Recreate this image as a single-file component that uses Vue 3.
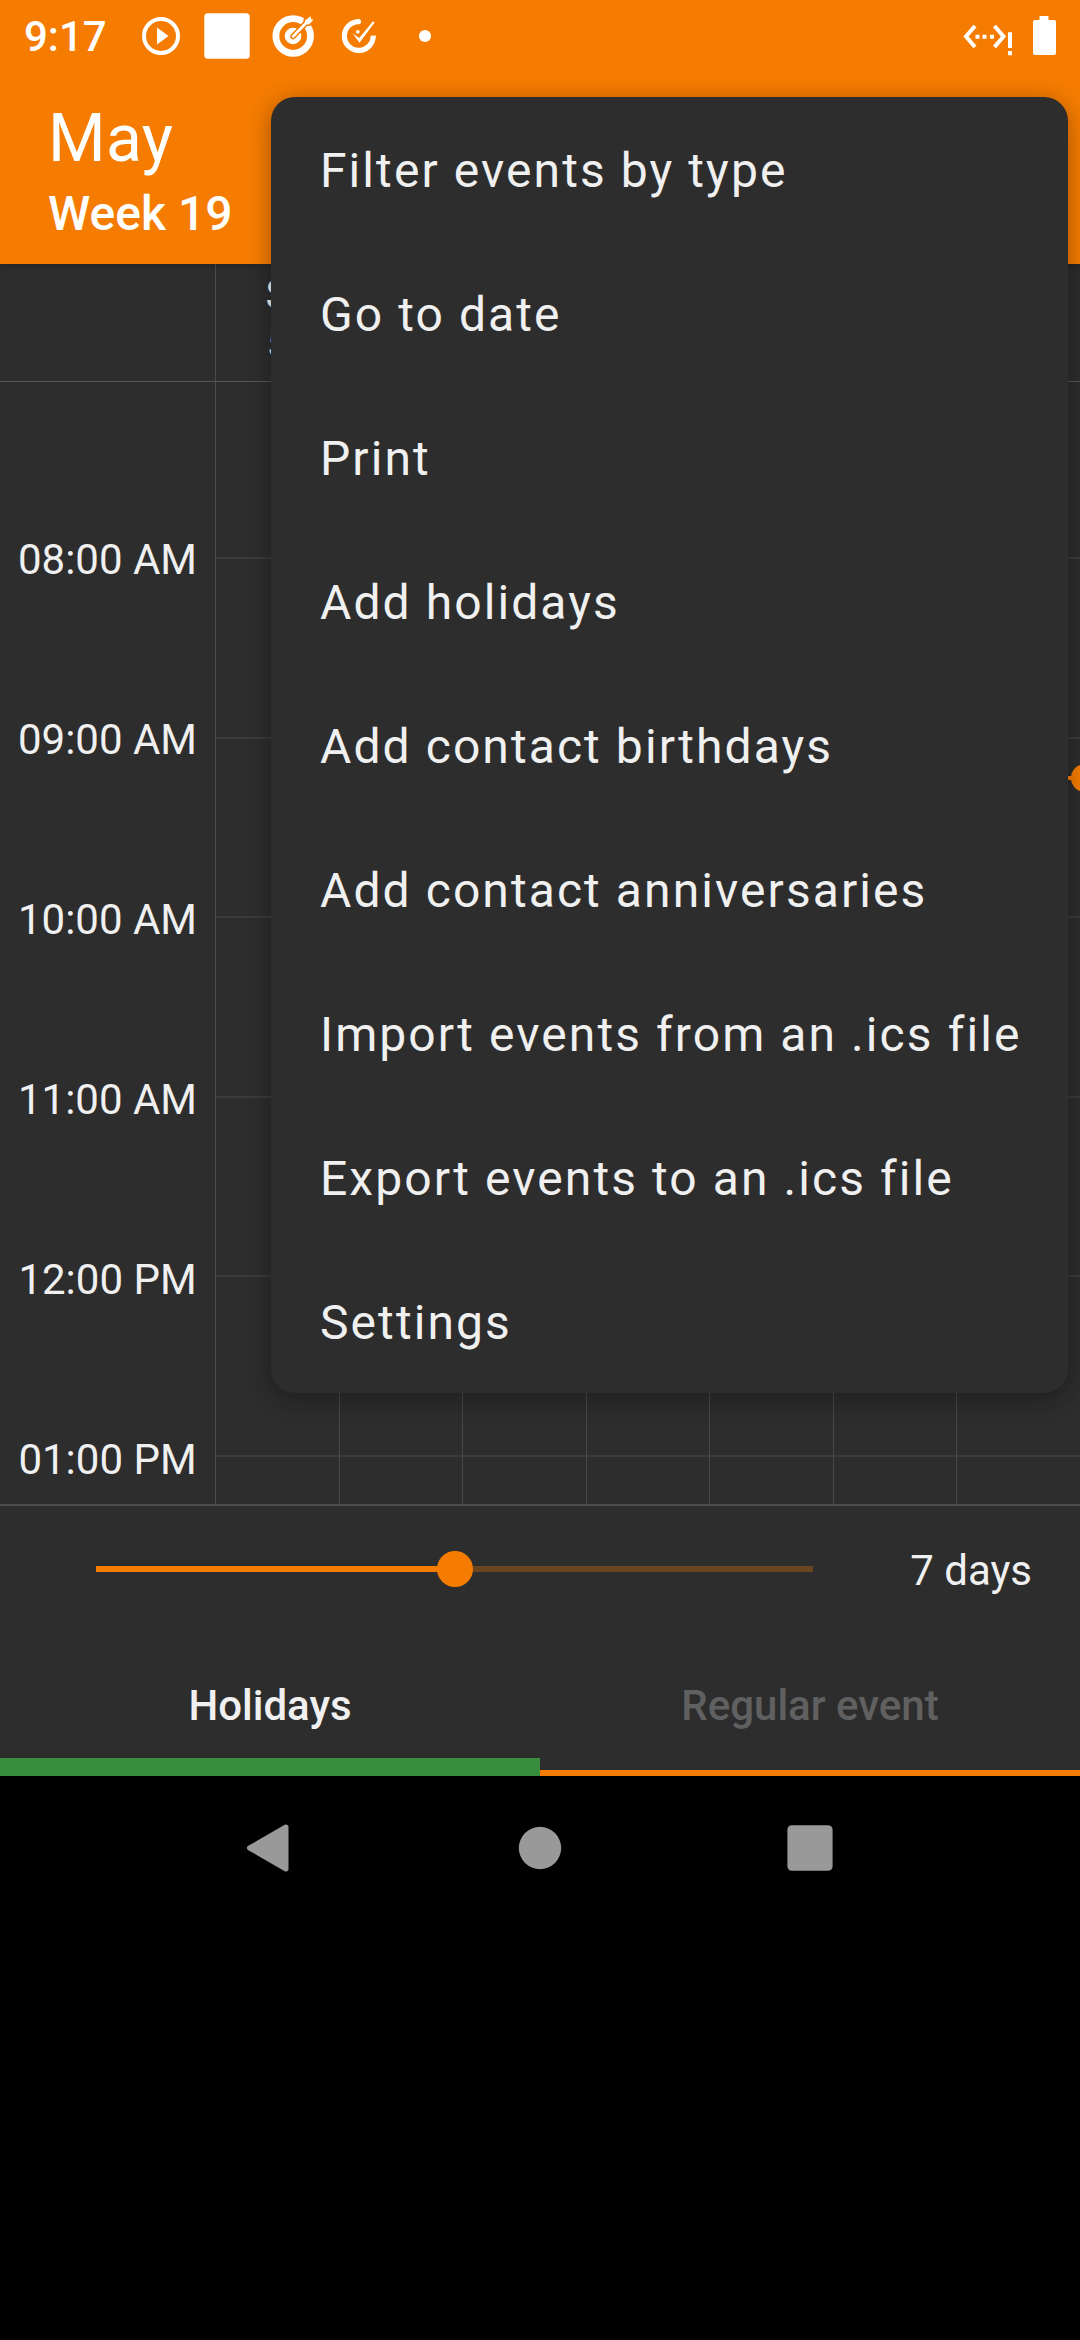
<script setup>
const menuItems = [
  'Filter events by type',
  'Go to date',
  'Print',
  'Add holidays',
  'Add contact birthdays',
  'Add contact anniversaries',
  'Import events from an .ics file',
  'Export events to an .ics file',
  'Settings',
]
const hours = ['08:00 AM', '09:00 AM', '10:00 AM', '11:00 AM', '12:00 PM', '01:00 PM']
const firstDay = { letter: 'S', date: 5 }
const daysSpan = 7
const sliderPercent = 50
</script>

<template>
  <div class="screen">
    <div class="status-bar">
      <span class="clock">9:17</span>
      <div class="notifications">
        <svg viewBox="0 0 48 48">
          <circle cx="24" cy="24" r="17" fill="none" stroke="#fff" stroke-width="4" />
          <path d="M20 15.500L31.500 24L20 32.500Z" fill="#fff" />
        </svg>
        <svg viewBox="0 0 48 48">
          <rect x="1.300" y="1.300" width="45.400" height="45.400" rx="3.500" fill="#fff" />
        </svg>
        <svg viewBox="0 0 48 48">
          <circle cx="24.200" cy="24" r="17.300" fill="none" stroke="#fff" stroke-width="6.800" />
          <circle cx="24" cy="24" r="8.300" fill="#fff" />
          <path d="M24 24.500L37 11" stroke="#f57c00" stroke-width="5.600" stroke-linecap="round" />
          <path d="M34.500 12.500V7L39.500 2.500L41.500 7L46 9L41 14H35Z" fill="#f57c00" />
          <path d="M24 24.500L38 10" stroke="#fff" stroke-width="2.600" stroke-linecap="round" />
          <path d="M36 12V8.500L41.500 4.200L42 7L44.500 7.800L40 12.500H36Z" fill="#fff" />
        </svg>
        <svg viewBox="0 0 48 48">
          <path d="M23.500 9.600A14.400 14.400 0 1 0 38.200 23.600" fill="none" stroke="#fff" stroke-width="5.200" />
          <circle cx="23.500" cy="9.600" r="2.600" fill="#fff" />
          <path d="M17.500 21.200L24.200 26L38 9.300L39.600 10.500L24.500 30.800Z" fill="#fff" />
          <circle cx="22.800" cy="19.800" r="1.900" fill="#fff" />
        </svg>
        <svg viewBox="0 0 48 48"><circle cx="24" cy="24" r="6.100" fill="#fff" /></svg>
      </div>
      <svg class="network" viewBox="0 0 50 48">
        <path d="M13 14L4 24.500L13 35M32.500 14L41.500 24.500L32.500 35" fill="none" stroke="#fff" stroke-width="4" />
        <path d="M13.500 22.700h4v4h-4zM20.500 22.700h4v4h-4zM28 22.700h4v4h-4zM46 20.300h4v15.700h-4zM46 39h4v4.300h-4z" fill="#fff" />
      </svg>
      <svg class="battery" viewBox="0 0 24 48">
        <path d="M7.500 4h9v4h5.500a2 2 0 0 1 2 2v31a2 2 0 0 1-2 2h-19a2 2 0 0 1-2-2v-31a2 2 0 0 1 2-2h4.500z" fill="#fff" />
      </svg>
    </div>

    <header class="app-bar">
      <h1>May</h1>
      <h2>Week 19</h2>
    </header>

    <main class="week">
      <div class="week-head">
        <div class="corner"></div>
        <div class="day-label">
          <span>{{ firstDay.letter }}</span>
          <span>{{ firstDay.date }}</span>
        </div>
      </div>
      <div class="week-body">
        <div class="time-column">
          <div v-for="hour in hours" :key="hour" class="hour-label">{{ hour }}</div>
        </div>
        <div class="day-grid">
          <div class="hour-lines">
            <div v-for="hour in hours" :key="hour" class="hour-line"></div>
          </div>
          <div class="day-columns">
            <div v-for="day in daysSpan" :key="day" class="day-column"></div>
          </div>
          <div class="now-marker"></div>
        </div>
      </div>
    </main>

    <section class="zoom-bar">
      <div class="slider">
        <div class="slider-fill" :style="{ width: sliderPercent + '%' }"></div>
        <div class="slider-thumb" :style="{ left: sliderPercent + '%' }"></div>
      </div>
      <span class="span-label">{{ daysSpan }} days</span>
    </section>

    <section class="event-types">
      <div class="type holidays">Holidays</div>
      <div class="type regular">Regular event</div>
    </section>

    <nav class="system-nav">
      <svg viewBox="0 0 60 60"><path d="M46 9L9.500 30L46 51Z" fill="#999" stroke="#999" stroke-width="5" stroke-linejoin="round" /></svg>
      <svg viewBox="0 0 60 60"><circle cx="30" cy="30" r="21.200" fill="#999" /></svg>
      <svg viewBox="0 0 60 60"><rect x="7.400" y="7.300" width="45.200" height="45.400" rx="4.500" fill="#999" /></svg>
    </nav>

    <ul class="menu">
      <li v-for="item in menuItems" :key="item">{{ item }}</li>
    </ul>
  </div>
</template>

<style>
body {
  background: #000;
}
</style>

<style scoped>
.screen {
  position: relative;
  width: 1080px;
  height: 2340px;
  overflow: hidden;
  background: #000;
  color: #f0f0f0;
  font-family: Roboto, sans-serif;
  font-size: 42px;
}
.status-bar {
  position: relative;
  z-index: 1;
  display: flex;
  align-items: center;
  box-sizing: border-box;
  height: 72px;
  padding: 0 24px;
  background: #f57c00;
  color: #fff;
}
.clock {
  width: 113px;
  font-weight: 500;
  line-height: 72px;
  padding-top: 2px;
}
.notifications {
  display: flex;
  gap: 18px;
}
.notifications svg {
  width: 48px;
  height: 48px;
}
.network {
  width: 50px;
  height: 48px;
  margin-left: auto;
}
.battery {
  width: 24px;
  height: 48px;
  margin-left: 20px;
}
.app-bar {
  position: relative;
  box-sizing: border-box;
  height: 192px;
  padding: 28px 48px 0;
  background: #f57c00;
  color: #fff;
  box-shadow: 0 2px 8px rgba(0, 0, 0, 0.22);
}
.app-bar h1 {
  margin: 0;
  font-size: 66px;
  font-weight: 400;
  line-height: 78px;
  letter-spacing: 0.400px;
}
.app-bar h2 {
  margin: 0;
  font-size: 48px;
  font-weight: 500;
  line-height: 72px;
}
.week {
  height: 1240px;
  background: #2d2d2d;
  border-bottom: 2px solid #4b4b4b;
}
.week-head {
  display: flex;
  box-sizing: border-box;
  height: 118px;
  border-bottom: 1px solid #565656;
}
.corner {
  box-sizing: border-box;
  width: 216px;
  border-right: 1px solid #4b4b4b;
}
.day-label {
  display: flex;
  flex-direction: column;
  align-items: center;
  width: 124px;
  padding-top: 6px;
  line-height: 49px;
}
.week-body {
  display: flex;
  height: 1122px;
  overflow: hidden;
}
.time-column {
  box-sizing: border-box;
  width: 216px;
  padding-top: 88px;
  border-right: 1px solid #4b4b4b;
}
.hour-label {
  height: 180px;
  line-height: 180px;
  text-align: center;
}
.day-grid {
  position: relative;
  flex: 1;
  display: grid;
}
.hour-lines,
.day-columns {
  grid-area: 1 / 1;
}
.hour-line {
  box-sizing: border-box;
  height: 179.600px;
  border-bottom: 2px solid #3b3b3b;
}
.hour-line:first-child {
  height: 177px;
}
.day-columns {
  display: flex;
}
.day-column {
  flex: 1;
  box-sizing: border-box;
  border-right: 1px solid #484848;
}
.day-column:last-child {
  border-right: 0;
}
.now-marker {
  position: absolute;
  top: 382px;
  right: -19px;
  width: 28px;
  height: 28px;
  border-radius: 50%;
  background: #f57c00;
}
.now-marker::before {
  content: '';
  position: absolute;
  left: -14px;
  top: 12px;
  width: 18px;
  height: 4px;
  background: #f57c00;
}
.zoom-bar {
  display: flex;
  align-items: center;
  justify-content: space-between;
  box-sizing: border-box;
  height: 126px;
  padding: 0 48px 0 96px;
  background: #2d2d2d;
}
.slider {
  position: relative;
  width: 717px;
  height: 6px;
  background: #69441f;
}
.slider-fill {
  height: 100%;
  background: #f57c00;
}
.slider-thumb {
  position: absolute;
  top: -15px;
  width: 36px;
  height: 36px;
  margin-left: -18px;
  border-radius: 50%;
  background: #f57c00;
}
.span-label {
  padding-top: 3px;
}
.event-types {
  display: flex;
  height: 144px;
  background: #2d2d2d;
}
.type {
  flex: 1;
  box-sizing: border-box;
  padding-top: 49px;
  line-height: 50px;
  text-align: center;
  font-weight: 500;
}
.holidays {
  border-bottom: 18px solid #388e3c;
}
.regular {
  color: #606060;
  border-bottom: 6px solid #f57c00;
}
.system-nav {
  display: flex;
  justify-content: center;
  align-items: center;
  gap: 210px;
  height: 144px;
}
.system-nav svg {
  width: 60px;
  height: 60px;
}
.menu {
  position: absolute;
  z-index: 2;
  top: 97px;
  left: 271px;
  width: 797px;
  margin: 0;
  padding: 0;
  border-radius: 24px;
  background: #2d2d2d;
  box-shadow: 0 8px 24px rgba(0, 0, 0, 0.22), 0 0 22px rgba(0, 0, 0, 0.13);
  list-style: none;
}
.menu li {
  height: 144px;
  padding-left: 49px;
  font-size: 48px;
  line-height: 147px;
  letter-spacing: 2.080px;
  white-space: nowrap;
}
</style>
